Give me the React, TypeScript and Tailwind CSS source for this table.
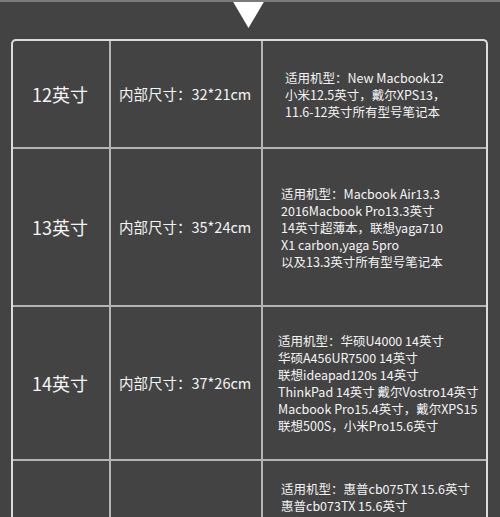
const rows = [
  {
    size: '12英寸',
    inner: '内部尺寸：32*21cm',
    h: 'h-[108px]',
    pl: 'pl-[22px] justify-center',
    models: ['适用机型：New Macbook12', '小米12.5英寸，戴尔XPS13，', '11.6-12英寸所有型号笔记本'],
  },
  {
    size: '13英寸',
    inner: '内部尺寸：35*24cm',
    h: 'h-[158px]',
    pl: 'pl-[18px] justify-center',
    models: [
      '适用机型：Macbook Air13.3',
      '2016Macbook Pro13.3英寸',
      '14英寸超薄本，联想yaga710',
      'X1 carbon,yaga 5pro',
      '以及13.3英寸所有型号笔记本',
    ],
  },
  {
    size: '14英寸',
    inner: '内部尺寸：37*26cm',
    h: 'h-[154px]',
    pl: 'pl-[15px] justify-center',
    models: [
      '适用机型：华硕U4000 14英寸',
      '华硕A456UR7500 14英寸',
      '联想ideapad120s 14英寸',
      'ThinkPad 14英寸 戴尔Vostro14英寸',
      'Macbook Pro15.4英寸，戴尔XPS15',
      '联想500S，小米Pro15.6英寸',
    ],
  },
  {
    size: '15英寸',
    inner: '内部尺寸：40*28cm',
    h: 'h-[160px]',
    pl: 'pl-[18px] pt-[19px]',
    models: [
      '适用机型：惠普cb075TX 15.6英寸',
      '惠普cb073TX 15.6英寸',
      '联想E570 15.6英寸',
      '以及15.6英寸所有型号笔记本',
    ],
  },
]

export default function App() {
  return (
    <div
      className="w-[500px] h-[517px] overflow-hidden bg-[#434343] text-[#f4f4f4] border-t-2 border-[#7a7a7a]"
      style={{ fontFamily: '"Noto Sans CJK SC", "Noto Sans", sans-serif' }}
    >
      <svg width="500" height="26" viewBox="0 0 500 26" className="block">
        <polygon points="232,-2 265,-2 248.5,26" fill="#ffffff" />
      </svg>
      <div className="mt-[11px] ml-[11px] w-[477px] border-2 border-b-0 border-[#dcdcdc] rounded-t-[5px]">
        {rows.map((r, i) => (
          <div key={r.size} className={`grid grid-cols-[98px_152px_1fr] border-b-2 border-[#b4b4b4] ${r.h}`}>
            <div
              className={`flex justify-center border-r-2 border-[#b4b4b4] text-[18px] pr-[2px] ${
                i === 3 ? 'items-start pt-[80px]' : 'items-center'
              }`}
            >
              {r.size}
            </div>
            <div
              className={`flex border-r-2 border-[#b4b4b4] pl-[8px] text-[14.5px] whitespace-nowrap ${
                i === 3 ? 'items-start pt-[80px]' : 'items-center'
              }`}
            >
              {r.inner}
            </div>
            <div className={`flex flex-col ${r.pl} text-[12.5px] leading-[17px] whitespace-nowrap`}>
              {r.models.map((m) => (
                <div key={m}>{m}</div>
              ))}
            </div>
          </div>
        ))}
      </div>
    </div>
  )
}
